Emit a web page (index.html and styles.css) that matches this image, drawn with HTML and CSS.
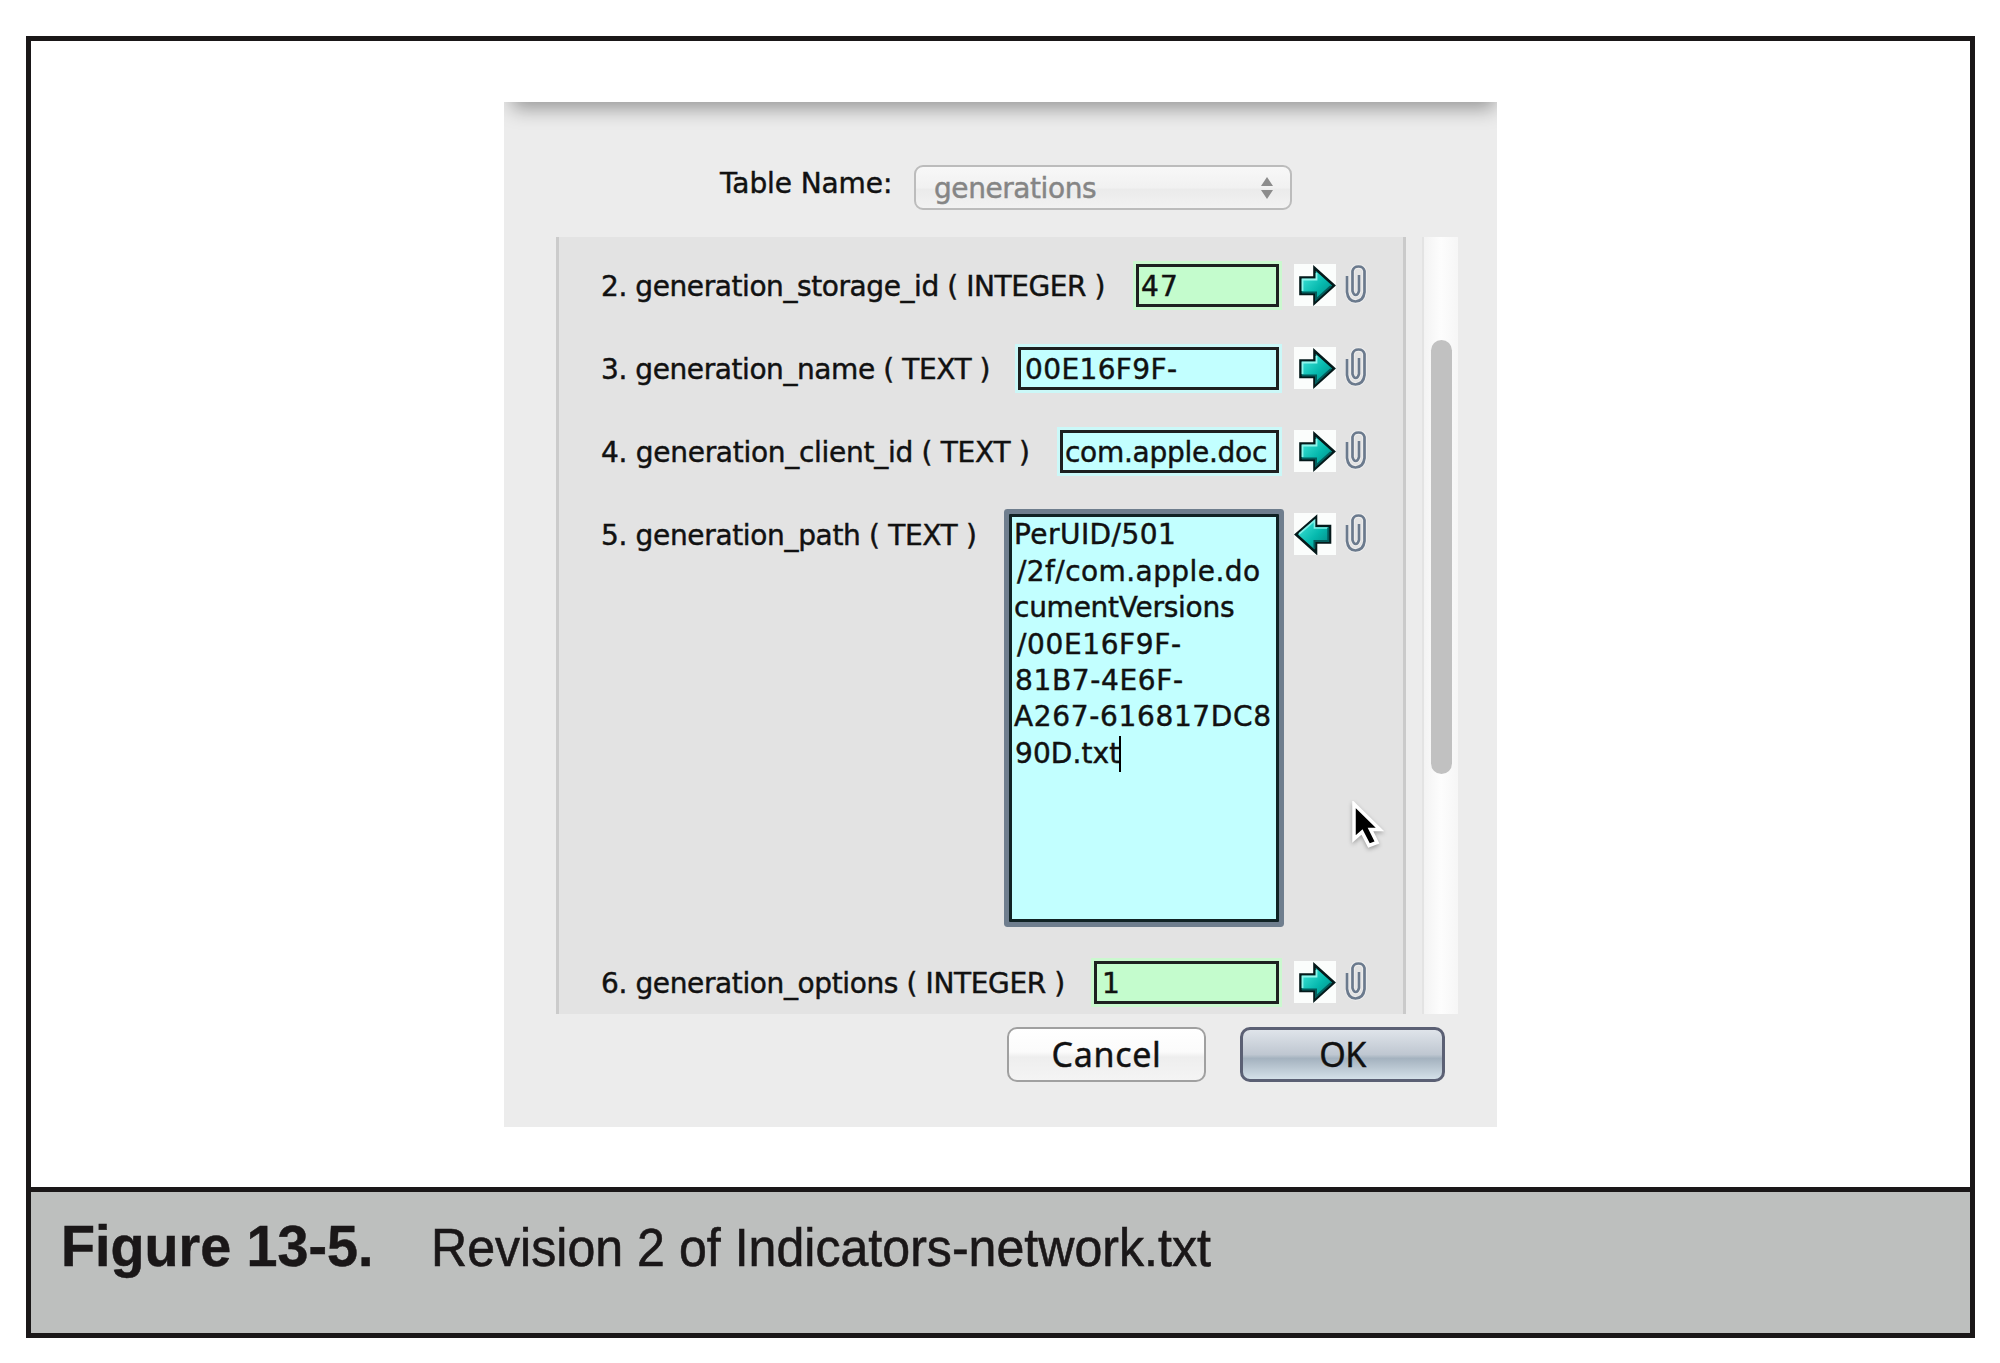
FILE: index.html
```html
<!DOCTYPE html>
<html lang="en">
<head>
<meta charset="utf-8">
<title>Figure 13-5</title>
<link rel="stylesheet" href="styles.css">
</head>
<body>
<svg class="defs" aria-hidden="true">
  <defs>
    <linearGradient id="teal" x1="0" y1="0" x2="1" y2="1">
      <stop offset="0.2" stop-color="#35dcd0"/><stop offset="0.55" stop-color="#06b9ae"/><stop offset="1" stop-color="#037c78"/>
    </linearGradient>
    <symbol id="arrow" viewBox="0 0 42 42">
      <rect width="42" height="42" fill="#fbfdfc"/>
      <path d="M6.5 13.5H20.5V4L40 21.500 20.500 39V30H6.500Z" fill="url(#teal)" stroke="#04191a" stroke-width="2.600" stroke-linejoin="miter"/>
      <path d="M8.500 27V15.500H22.500V9" fill="none" stroke="#8ff5ec" stroke-width="1.800"/>
      <path d="M8 28.500H22V35.500L37 22" fill="none" stroke="#035d5c" stroke-width="2"/>
    </symbol>
    <symbol id="arrow-back" viewBox="0 0 42 42">
      <rect width="42" height="42" fill="#fbfdfc"/>
      <path d="M36 13V29.500H22V39.500L2 21.500 22 4V13Z" fill="url(#teal)" stroke="#04191a" stroke-width="2.600"/>
      <path d="M5 21 20.500 7.500V15H33.500" fill="none" stroke="#7defe6" stroke-width="1.700"/>
      <path d="M34.300 15V28H20.500V35.500" fill="none" stroke="#035d5c" stroke-width="2"/>
    </symbol>
    <symbol id="clip" viewBox="0 0 22 40">
      <path d="M2 12V28Q3 37 10.500 37.500 18.500 37 19.500 28V7Q18.500 2.500 13.500 2.500 8.500 2.500 7.500 7V27Q8.500 31 10.700 31 13 31 14 27V11" fill="none" stroke="#fff" stroke-width="4.500" opacity=".45"/>
      <path d="M2 12V28Q3 37 10.500 37.500 18.500 37 19.500 28V7Q18.500 2.500 13.500 2.500 8.500 2.500 7.500 7V27Q8.500 31 10.700 31 13 31 14 27V11" fill="none" stroke="#6b7a8d" stroke-width="2.700"/>
    </symbol>
  </defs>
</svg>
<figure class="figure">
  <div class="stage">
    <section class="sheet">
      <div class="table-name">
        <label class="name-label">Table Name:</label>
        <div class="select"><span>generations</span>
          <svg class="updown" viewBox="0 0 12 22"><path d="M0 9 6 0 12 9ZM0 13H12L6 22Z" fill="#8c8c8c"/></svg>
        </div>
      </div>
      <div class="body">
        <div class="fields">
          <div class="row"><span class="label l2">2. generation_storage_id ( INTEGER )</span><span class="input green w2">47</span><svg class="go"><use href="#arrow"/></svg><svg class="clip"><use href="#clip"/></svg></div>
          <div class="row"><span class="label l3">3. generation_name ( TEXT )</span><span class="input cyan w3">00E16F9F-</span><svg class="go"><use href="#arrow"/></svg><svg class="clip"><use href="#clip"/></svg></div>
          <div class="row"><span class="label l4">4. generation_client_id ( TEXT )</span><span class="input cyan w4">com.apple.doc</span><svg class="go"><use href="#arrow"/></svg><svg class="clip"><use href="#clip"/></svg></div>
          <div class="row tall"><span class="label l5">5. generation_path ( TEXT )</span><div class="area cyan">
            <div class="t1">PerUID/501</div>
            <div class="t2">/2f/com.apple.do</div>
            <div class="t3">cumentVersions</div>
            <div class="t4">/00E16F9F-</div>
            <div class="t5">81B7-4E6F-</div>
            <div class="t6">A267-616817DC8</div>
            <div class="t7">90D.txt<i class="caret"></i></div>
          </div><svg class="go"><use href="#arrow-back"/></svg><svg class="clip"><use href="#clip"/></svg></div>
          <div class="row"><span class="label l6">6. generation_options ( INTEGER )</span><span class="input green w6">1</span><svg class="go"><use href="#arrow"/></svg><svg class="clip"><use href="#clip"/></svg></div>
        </div>
        <div class="track"><div class="thumb"></div></div>
      </div>
      <div class="actions">
        <button class="btn cancel">Cancel</button>
        <button class="btn ok">OK</button>
      </div>
      <svg class="pointer" viewBox="0 0 34 50"><path d="M4 3V38L12 31 19 44.500 27 41.500 20.500 28.500H30Z" fill="#000" stroke="#fff" stroke-width="3.500"/></svg>
    </section>
  </div>
  <figcaption class="caption"><b class="number">Figure 13-5.</b><span class="title">Revision 2 of Indicators-network.txt</span></figcaption>
</figure>
</body>
</html>
```
FILE: styles.css
```css
* { box-sizing: border-box; }
body { margin: 0; background: #fff; padding: 36px 25px 0 26px; height: 1363px; overflow: hidden; }
.defs { position: absolute; width: 0; height: 0; }
.figure { margin: 0; height: 1302px; border: 5px solid #1a1718; display: flex; flex-direction: column; }
.stage { height: 1146px; padding: 61px 0 0 473px; }

.sheet {
  position: relative; width: 993px; height: 1025px; background: #ececec;
  font-family: "DejaVu Sans", sans-serif; font-size: 28px; color: #111;
  -webkit-text-stroke: .45px currentColor;
  display: flex; flex-direction: column; overflow: hidden;
}
.sheet::before {
  content: ""; position: absolute; left: 12px; right: 6px; top: -20px; height: 20px;
  box-shadow: 0 2px 20px 4px rgba(0, 0, 0, .38);
}
.table-name { display: flex; padding: 63px 0 0 216px; height: 135px; }
.name-label { width: 194px; line-height: 40px; letter-spacing: -.1px; margin-top: -1px; }
.select {
  width: 378px; height: 45px; border: 2px solid #bcbcbc; border-radius: 9px;
  background: linear-gradient(#f8f8f8, #f1f1f1 50%, #ebebeb 55%, #f2f2f2);
  display: flex; justify-content: space-between; padding: 1px 17px 0 18px;
  color: #858585; line-height: 42px; letter-spacing: -.43px;
}
.updown { width: 12px; height: 22px; margin-top: 9px; }

.body { display: flex; height: 777px; padding-left: 52px; }
.fields {
  width: 850px; padding: 27px 0 0 42px; border-left: 3px solid #cbcbcb; border-right: 3px solid #cacaca;
  background: #e3e3e3; height: 777px; overflow: hidden;
}
.row { display: flex; height: 83.1px; align-items: flex-start; }
.row.tall { height: 448px; }
.label { flex: 1; line-height: 43px; padding-top: 1px; white-space: nowrap; }
.l2 { letter-spacing: -.42px; } .l3 { letter-spacing: -.42px; } .l4 { letter-spacing: -.28px; }
.l5 { letter-spacing: -.34px; } .l6 { letter-spacing: -.38px; }
.input { height: 43px; border: 3px solid #1d2020; line-height: 39px; white-space: nowrap; }
.green { background: #c4fccd; }
.cyan { background: #c2ffff; }
.input.green { box-shadow: 0 0 0 3px #cbf8cf; }
.input.cyan { box-shadow: 0 0 0 3px #cbf8f8; }
.w2 { width: 143px; padding-left: 2px; letter-spacing: 1.2px; }
.w3 { width: 261px; padding-left: 4px; letter-spacing: .38px; }
.w4 { width: 219px; padding-left: 2px; letter-spacing: -.27px; }
.w6 { width: 185px; padding-left: 5px; }
.area {
  width: 270px; height: 408px; margin-top: 1px; border: 3px solid #102224; box-shadow: 0 0 0 5px #6f7e8e;
  border-radius: 1px; line-height: 36.4px; white-space: nowrap;
}
.t1 { padding-left: 2px; letter-spacing: .44px; }
.t2 { padding-left: 5px; letter-spacing: .42px; }
.t3 { padding-left: 2px; letter-spacing: -.26px; }
.t4 { padding-left: 5px; letter-spacing: .62px; }
.t5 { padding-left: 3px; letter-spacing: .65px; }
.t6 { padding-left: 2px; letter-spacing: .66px; }
.t7 { padding-left: 3px; letter-spacing: .1px; display: flex; }
.caret { width: 2px; height: 36px; background: #000; margin-left: -1px; }
.go { width: 42px; height: 42px; margin-left: 15px; flex: none; }
.clip { width: 22px; height: 40px; margin: 0 36px 0 9px; flex: none; }
.track {
  width: 36px; margin-left: 16px; padding: 103px 6px 0 7px; border-left: 2px solid #e3e3e3;
  background: linear-gradient(90deg, #f3f3f3, #fdfdfd 50%, #f6f6f6);
}
.thumb { height: 434px; width: 21px; border-radius: 11px; background: #c1c1c1; }

.actions { display: flex; padding: 13px 0 0 503px; gap: 34px; }
.btn {
  height: 55px; margin: 0; padding: 0 0 2px; border-radius: 10px;
  font: 34px/48px "Noto Sans", sans-serif; color: #111; -webkit-text-stroke: .45px currentColor;
}
.cancel {
  width: 199px; border: 2px solid #a0a0a0; letter-spacing: .7px;
  background: linear-gradient(#fff, #fbfbfb 45%, #eeeeee 55%, #f4f4f4);
}
.ok {
  width: 205px; border: 3px solid #5b6074; letter-spacing: -.5px;
  background: linear-gradient(#dfe4ea, #bfc7d1 50%, #a4b2bf 58%, #d4e0e8);
}
.pointer { position: absolute; left: 846px; top: 699px; width: 34px; height: 50px; filter: drop-shadow(0 2px 2px rgba(0, 0, 0, .3)); }

.caption {
  flex: 1; border-top: 5px solid #1a1718; background: #bdbfbe; color: #1a1718;
  display: flex; align-items: baseline; padding: 24px 0 0 30px;
  font-family: "Liberation Sans", Arial, sans-serif; white-space: nowrap;
}
.number { width: 370px; font-size: 58px; line-height: 60px; transform: scaleX(.96); transform-origin: 0 0; -webkit-text-stroke: .5px currentColor; }
.title { font-size: 53px; line-height: 60px; transform: scaleX(.9456); transform-origin: 0 0; -webkit-text-stroke: .6px currentColor; }
```
